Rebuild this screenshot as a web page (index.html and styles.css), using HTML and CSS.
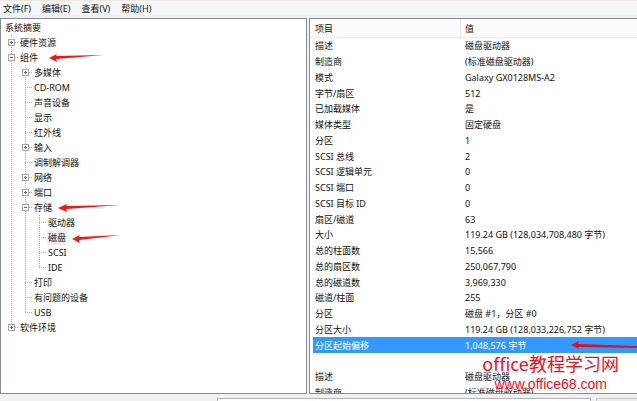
FILE: index.html
```html
<!DOCTYPE html>
<html lang="zh-CN">
<head>
  <meta charset="UTF-8">
  <meta name="viewport" content="width=device-width, initial-scale=1.0">
  <title>系统信息</title>
  <link rel="stylesheet" href="styles.css">
</head>
<body>
  <!-- Shared icons -->
  <svg class="icons" aria-hidden="true">
    <symbol id="plus" viewBox="0 0 7 7">
      <rect x="0.5" y="0.5" width="6" height="6" fill="#fafafa" stroke="#a8a8a8"/>
      <path d="M2 3.5h3M3.5 2v3" stroke="#4a68ac"/>
    </symbol>
    <symbol id="minus" viewBox="0 0 7 7">
      <rect x="0.5" y="0.5" width="6" height="6" fill="#fafafa" stroke="#a8a8a8"/>
      <path d="M2 3.5h3" stroke="#4a68ac"/>
    </symbol>
  </svg>

  <nav class="menu-bar">
    <button type="button">文件(F)</button>
    <button type="button">编辑(E)</button>
    <button type="button">查看(V)</button>
    <button type="button">帮助(H)</button>
  </nav>

  <main class="panes">
    <!-- Category tree -->
    <section class="pane tree-pane">
      <div class="root">系统摘要</div>
      <ul class="tree">
        <li><div class="node"><button type="button" class="toggle" aria-label="展开"><svg><use href="#plus"/></svg></button><span class="label">硬件资源</span></div></li>
        <li>
          <div class="node"><button type="button" class="toggle" aria-label="折叠"><svg><use href="#minus"/></svg></button><span class="label">组件</span>
            <svg class="arrow" viewBox="0 0 66 9"><path d="M5 5L13 1L12 3L60 2L12 6L13 9Z"/></svg>
          </div>
          <ul>
            <li><div class="node"><button type="button" class="toggle" aria-label="展开"><svg><use href="#plus"/></svg></button><span class="label">多媒体</span></div></li>
            <li><div class="node"><span class="label">CD-ROM</span></div></li>
            <li><div class="node"><span class="label">声音设备</span></div></li>
            <li><div class="node"><span class="label">显示</span></div></li>
            <li><div class="node"><span class="label">红外线</span></div></li>
            <li><div class="node"><button type="button" class="toggle" aria-label="展开"><svg><use href="#plus"/></svg></button><span class="label">输入</span></div></li>
            <li><div class="node"><span class="label">调制解调器</span></div></li>
            <li><div class="node"><button type="button" class="toggle" aria-label="展开"><svg><use href="#plus"/></svg></button><span class="label">网络</span></div></li>
            <li><div class="node"><button type="button" class="toggle" aria-label="展开"><svg><use href="#plus"/></svg></button><span class="label">端口</span></div></li>
            <li>
              <div class="node"><button type="button" class="toggle" aria-label="折叠"><svg><use href="#minus"/></svg></button><span class="label">存储</span>
                <svg class="arrow" viewBox="0 0 66 9"><path d="M0 5L9 1L8 3L63 2L8 6L9 9Z"/></svg>
              </div>
              <ul>
                <li><div class="node"><span class="label">驱动器</span></div></li>
                <li><div class="node"><span class="label selected">磁盘</span>
                  <svg class="arrow" viewBox="0 0 66 9"><path d="M0 6L8 2L7 4L49 2L7 7L8 10Z"/></svg>
                </div></li>
                <li><div class="node"><span class="label">SCSI</span></div></li>
                <li><div class="node"><span class="label">IDE</span></div></li>
              </ul>
            </li>
            <li><div class="node"><span class="label">打印</span></div></li>
            <li><div class="node"><span class="label">有问题的设备</span></div></li>
            <li><div class="node"><span class="label">USB</span></div></li>
          </ul>
        </li>
        <li><div class="node"><button type="button" class="toggle" aria-label="展开"><svg><use href="#plus"/></svg></button><span class="label">软件环境</span></div></li>
      </ul>
    </section>

    <!-- Details of the selected category -->
    <section class="pane detail-pane">
      <table class="details">
        <thead>
          <tr><th>项目</th><th>值</th></tr>
        </thead>
        <tbody>
          <tr><td>描述</td><td>磁盘驱动器</td></tr>
          <tr><td>制造商</td><td>(标准磁盘驱动器)</td></tr>
          <tr><td>模式</td><td>Galaxy GX0128MS-A2</td></tr>
          <tr><td>字节/扇区</td><td>512</td></tr>
          <tr><td>已加载媒体</td><td>是</td></tr>
          <tr><td>媒体类型</td><td>固定硬盘</td></tr>
          <tr><td>分区</td><td>1</td></tr>
          <tr><td>SCSI 总线</td><td>2</td></tr>
          <tr><td>SCSI 逻辑单元</td><td>0</td></tr>
          <tr><td>SCSI 端口</td><td>0</td></tr>
          <tr><td>SCSI 目标 ID</td><td>0</td></tr>
          <tr><td>扇区/磁道</td><td>63</td></tr>
          <tr><td>大小</td><td>119.24 GB (128,034,708,480 字节)</td></tr>
          <tr><td>总的柱面数</td><td>15,566</td></tr>
          <tr><td>总的扇区数</td><td>250,067,790</td></tr>
          <tr><td>总的磁道数</td><td>3,969,330</td></tr>
          <tr><td>磁道/柱面</td><td>255</td></tr>
          <tr><td>分区</td><td>磁盘 #1，分区 #0</td></tr>
          <tr><td>分区大小</td><td>119.24 GB (128,033,226,752 字节)</td></tr>
          <tr class="current">
            <td>分区起始偏移</td>
            <td>1,048,576 字节
              <svg class="arrow dark" viewBox="0 0 66 9"><path d="M0 4L8 0L7 3L66 5V7L7 6L8 8Z"/></svg>
            </td>
          </tr>
          <tr><td></td><td></td></tr>
          <tr><td>描述</td><td>磁盘驱动器</td></tr>
          <tr><td>制造商</td><td>(标准磁盘驱动器)</td></tr>
        </tbody>
      </table>
      <div class="watermark">
        <div class="site-name">office教程学习网</div>
        <div class="site-url">www.office68.com</div>
      </div>
    </section>
  </main>

  <footer class="find-bar">
    <input type="text" aria-label="查找什么">
    <button type="button" aria-label="查找"></button>
  </footer>
</body>
</html>
```

FILE: styles.css
```css
* {
  box-sizing: border-box;
}

body {
  display: flex;
  flex-direction: column;
  height: 100vh;
  margin: 0;
  overflow: hidden;
  background-color: #f0f0f0;
  color: #111;
  font-family: "Noto Sans", "Noto Sans CJK SC", sans-serif;
  font-size: 9px;
  line-height: 15px;
}

button {
  padding: 0;
  border: 0;
  background: none;
  color: inherit;
  font: inherit;
}

.icons {
  display: none;
}

/* Menu */
.menu-bar {
  display: flex;
  gap: 11px;
  height: 15px;
  padding-left: 3px;
  border-top: 1px solid #f0e9df;
  background-color: #f5f6f8;
  line-height: 13px;
}

/* Panes */
.panes {
  display: flex;
  flex: 1;
  gap: 2px;
  min-height: 0;
  padding-top: 3px;
}

.pane {
  border: 1px solid #888c95;
  background-color: #fff;
  overflow: hidden;
}

.tree-pane {
  flex: 0 0 307px;
  padding-top: 1px;
}

.detail-pane {
  position: relative;
  flex: 1;
  border-right: 0;
}

/* Tree */
.root {
  padding: 0 4px;
}

ul {
  margin: 0;
  padding: 0;
  list-style: none;
  background: repeating-linear-gradient(#b0b0b0 0 1px, transparent 1px 2px) 3px 0 / 1px calc(100% - 7px) no-repeat;
}

.tree {
  margin-left: 7px;
}

.tree ul {
  margin-left: 14px;
}

.node {
  display: flex;
  align-items: center;
  height: 15px;
  padding-left: 11px;
  background: repeating-linear-gradient(90deg, #b0b0b0 0 1px, transparent 1px 2px) 3px 7px / 7px 1px no-repeat;
}

.toggle {
  width: 7px;
  height: 7px;
  margin-left: -11px;
  margin-right: 4px;
}

.toggle svg {
  display: block;
  width: 7px;
  height: 7px;
}

.label {
  padding: 0 1px;
  white-space: nowrap;
}

.selected {
  background-color: #efefef;
}

.arrow {
  width: 66px;
  height: 9px;
  margin-left: 5px;
  overflow: visible;
  fill: #fa1410;
}

/* Details */
.details {
  width: 100%;
  table-layout: fixed;
  border-spacing: 0;
}

.details th {
  height: 19px;
  padding: 0 4px;
  border-bottom: 1px solid #e4ecf4;
  background-color: #fcfcfc;
  font-weight: normal;
  text-align: left;
}

.details th:first-child {
  width: 151px;
  padding-left: 5px;
  border-right: 1px solid #e4ecf4;
}

.details td {
  position: relative;
  height: 16px;
  padding: 0 4px;
  white-space: nowrap;
}

.details tbody tr:nth-child(4n + 1) td {
  height: 15px;
}

.details td:first-child {
  padding-left: 2px;
  border-left: 3px solid #fff;
}

.current {
  background-color: #3399ff;
  color: #fff;
}

.dark {
  position: absolute;
  top: 4px;
  right: 0;
  fill: #d9141e;
}

.watermark {
  position: absolute;
  right: 18px;
  bottom: 0;
  color: #fb0a18;
  text-align: right;
}

.site-name {
  font-size: 18px;
  line-height: 22px;
}

.site-url {
  padding-right: 12px;
  font-family: "Liberation Sans", sans-serif;
  font-size: 14px;
  line-height: 18px;
}

/* Find bar, cut off by the window edge */
.find-bar {
  display: flex;
  gap: 5px;
  height: 7px;
  padding: 4px 0 0 217px;
  overflow: hidden;
}

.find-bar input {
  flex: 1;
  height: 20px;
  border: 1px solid #b4b4b8;
  background-color: #fff;
}

.find-bar button {
  width: 41px;
  height: 20px;
  border: 1px solid #c8c8c8;
  border-right: 0;
  background-color: #ececec;
}
```
